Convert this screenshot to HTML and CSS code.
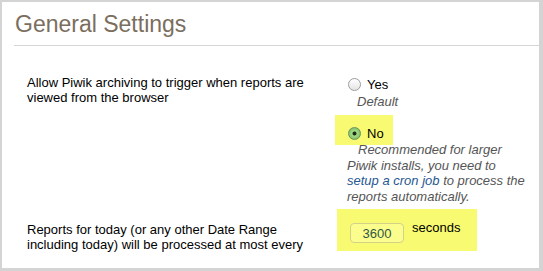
FILE: index.html
```html
<!DOCTYPE html>
<html lang="en">
<head>
    <meta charset="UTF-8">
    <title>General Settings</title>
    <link rel="stylesheet" href="styles.css">
</head>
<body>
<div class="frame">
    <div class="panel">
        <h2 class="title">General Settings</h2>
        <div class="settings">
            <div class="label">Allow Piwik archiving to trigger when reports are viewed from the browser</div>
            <div class="field">
                <label class="opt"><input type="radio" name="archiving">Yes</label>
                <div class="note note-default">Default</div>
                <label class="opt opt-on"><input type="radio" name="archiving" checked>No</label>
                <div class="note note-long">Recommended for larger Piwik installs, you need to <a href="#">setup a cron job</a> to process the reports automatically.</div>
            </div>

            <div class="label label-ttl">Reports for today (or any other Date Range including today) will be processed at most every</div>
            <div class="field">
                <div class="ttl">
                    <input class="num" type="text" value="3600">
                    <span>seconds</span>
                </div>
            </div>
        </div>
    </div>
</div>
</body>
</html>
```

FILE: styles.css
```css
* {
    padding: 0;
    margin: 0;
    box-sizing: border-box;
}

body {
    background-color: #d4d4d4;
    font-family: "Liberation Sans", Arial, sans-serif;
    font-size: 13px;
    line-height: 15px;
    color: #000;
}

.frame {
    width: 543px;
    height: 271px;
    padding: 2px 4px 3px 2px;
}

.panel {
    height: 100%;
    background-color: #fff;
    overflow: hidden;
}

.title {
    margin: 9px 0 0 12px;
    padding: 0 0 8px 1px;
    font-size: 23px;
    line-height: 26px;
    font-weight: normal;
    color: #7b6e5d;
    border-bottom: 1px solid #d6d6d6;
}

.settings {
    display: grid;
    grid-template-columns: 290px 1fr;
    column-gap: 18px;
    row-gap: 5px;
    margin-top: 29px;
    padding-left: 25px;
}

.label-ttl {
    margin-top: 13px;
}

/* radio options */
.opt {
    display: flex;
    align-items: center;
    gap: 6px;
    padding: 2px 0 0 13px;
    height: 17px;
}

.opt input {
    appearance: none;
    -webkit-appearance: none;
    width: 13px;
    height: 13px;
    border: 1px solid #9c9c9c;
    border-radius: 50%;
    background: linear-gradient(#ffffff, #e4e4e4);
}

.opt input:checked {
    border-color: #6f8f5f;
    background: radial-gradient(circle, #1d2d18 0, #1d2d18 1.6px, #a6dc88 2.4px, #7cc063 6px);
}

.opt-on {
    display: inline-flex;
    height: auto;
    margin-top: 6px;
    padding: 11px 9px 4px 13px;
    background-color: #f8fb72;
}

.note {
    font-style: italic;
    color: #555;
}

.note-default {
    margin-top: 2px;
    padding-left: 22px;
}

.note-long {
    width: 196px;
    margin-top: -3px;
    padding-left: 12px;
    line-height: 15.5px;
    text-indent: 11px;
}

.note-long a {
    color: #255792;
    text-decoration: none;
}

/* seconds field */
.ttl {
    display: inline-flex;
    align-items: flex-start;
    gap: 8px;
    margin-left: 2px;
    padding: 11px 17px 8px 13px;
    background-color: #f8fb72;
}

.num {
    width: 54px;
    height: 20px;
    margin-top: 3px;
    border: 1px solid #d3d28a;
    border-radius: 4px;
    background-color: #fbfd8c;
    font-family: "Liberation Sans", Arial, sans-serif;
    font-size: 13px;
    color: #2e5748;
    text-align: center;
}
```
